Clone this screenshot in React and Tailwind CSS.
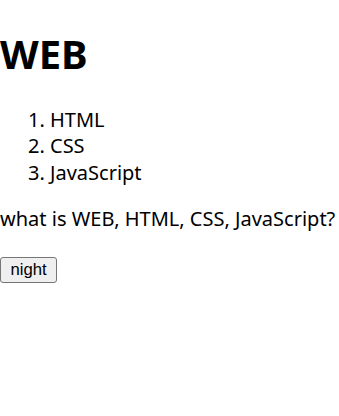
export default function App() {
    return (
        <div className="flow-root bg-white text-black h-[416px] overflow-hidden text-[20px] leading-[26.6px]" style={{ fontFamily: '"Noto Sans", sans-serif' }}>
            <h1 className="text-[40px] font-bold leading-[53px] my-[26.8px]">WEB</h1>
            <ol className="list-decimal pl-[50px] my-[20px]">
                <li>HTML</li>
                <li>CSS</li>
                <li>JavaScript</li>
            </ol>
            <p className="my-[20px]">what is WEB, HTML, CSS, JavaScript?</p>
            <div className="pt-[2px]">
                <button type="button" className="text-[16.7px] leading-[20px] px-[9.5px] py-[2px] bg-[#efefef] border border-[#767676] rounded-[3px]" style={{ fontFamily: '"Liberation Sans", Arial, sans-serif' }}>
                    night
                </button>
            </div>
        </div>
    );
}
